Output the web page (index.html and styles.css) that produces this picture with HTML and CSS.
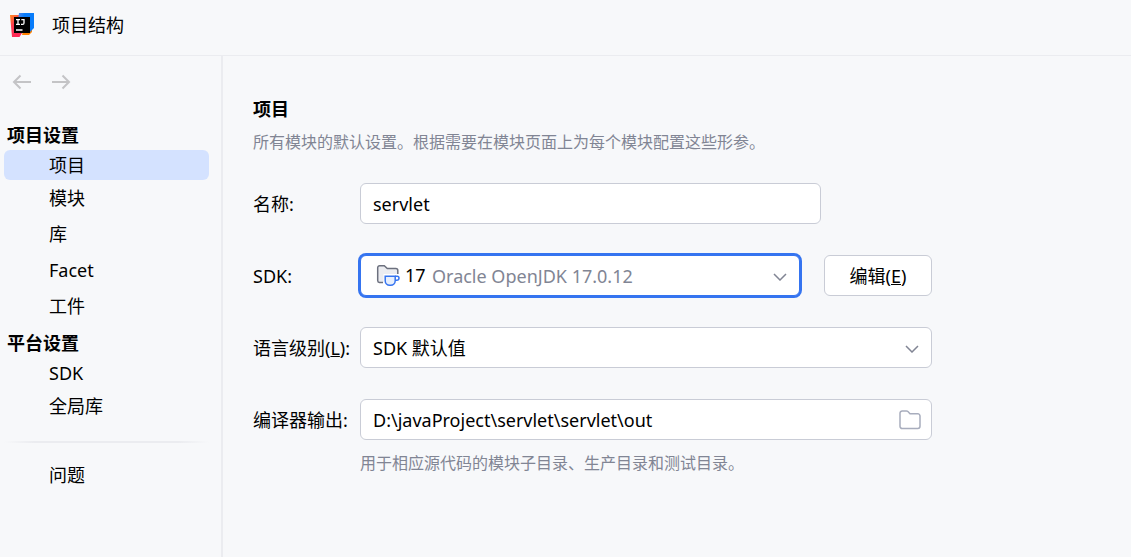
FILE: index.html
```html
<!DOCTYPE html>
<html lang="zh-CN">
<head>
<meta charset="utf-8">
<title>项目结构</title>
<link rel="stylesheet" href="styles.css">
</head>
<body>
<header class="titlebar">
  <svg class="logo" viewBox="0 0 24 24" aria-hidden="true">
    <defs>
      <linearGradient id="warm" x1="0" y1="0" x2="0.5" y2="1">
        <stop offset="0" stop-color="#ff8a1c"/>
        <stop offset="0.45" stop-color="#ff3d4f"/>
        <stop offset="1" stop-color="#fe2857"/>
      </linearGradient>
      <linearGradient id="cool" x1="0" y1="0" x2="1" y2="0.3">
        <stop offset="0" stop-color="#5b8bea"/>
        <stop offset="0.4" stop-color="#087cfa"/>
        <stop offset="1" stop-color="#087cfa"/>
      </linearGradient>
    </defs>
    <path fill="#ff8100" d="M14 14h8v5l-3 3h-7z"/>
    <path fill="url(#warm)" d="M0 2h12v18l-2.500 4H2z"/>
    <path fill="url(#cool)" d="M9 0h15v15l-4 4-12-12z"/>
    <path d="M4 4h16v16H4z"/>
    <path fill="none" stroke="#fff" stroke-width="1.300" d="M6 6.600h4M8 6.600v4.800M6 11.400h4M11.300 6.600h2.700v3.300c0 1-.6 1.500-1.300 1.500h-1.700M6 17h6.500"/>
  </svg>
  <h1 class="title">项目结构</h1>
</header>
<div class="body">
  <aside class="sidebar">
    <div class="history">
      <button class="history-button" type="button" aria-label="后退">
        <svg class="arrow" viewBox="0 0 20 16"><path d="M19 8H2M8.500 1.500 2 8l6.500 6.500"/></svg>
      </button>
      <button class="history-button" type="button" aria-label="前进">
        <svg class="arrow" viewBox="0 0 20 16"><path d="M1 8h17M11.500 1.500 18 8l-6.500 6.500"/></svg>
      </button>
    </div>
    <nav class="nav">
      <h2 class="nav-heading">项目设置</h2>
      <a class="nav-item compact selected" href="#project" aria-current="page">项目</a>
      <a class="nav-item" href="#modules">模块</a>
      <a class="nav-item" href="#libraries">库</a>
      <a class="nav-item" href="#facets">Facet</a>
      <a class="nav-item" href="#artifacts">工件</a>
      <h2 class="nav-heading">平台设置</h2>
      <a class="nav-item compact" href="#sdks">SDK</a>
      <a class="nav-item" href="#global">全局库</a>
      <hr class="divider">
      <a class="nav-item" href="#problems">问题</a>
    </nav>
  </aside>
  <main class="content">
    <h2 class="heading">项目</h2>
    <p class="hint">所有模块的默认设置。根据需要在模块页面上为每个模块配置这些形参。</p>
    <form class="form">
      <div class="row">
        <label class="label" for="name">名称:</label>
        <input class="control name" id="name" type="text" value="servlet">
      </div>
      <div class="row">
        <label class="label" for="sdk">SDK:</label>
        <div class="sdk-group">
          <div class="field">
            <select class="control sdk" id="sdk"><option>Oracle OpenJDK 17.0.12</option></select>
            <span class="sdk-version">
              <svg class="sdk-icon" viewBox="0 0 24 24" aria-hidden="true">
                <path fill="#ebecf0" stroke="#6c707e" stroke-width="1.500" d="M7 19.500H3.500A2 2 0 0 1 1.700 17.500V4.700a2 2 0 0 1 2-2h4.600l3 2.800h8.500a2 2 0 0 1 2 2V11"/>
                <path fill="#fff" d="M7.500 11H24V22H7.500z"/>
                <path fill="#e7effd" stroke="#3574f0" stroke-width="1.500" d="M9.200 13.200h10v4.500a4.500 4.500 0 0 1-4.500 4.500h-1a4.500 4.500 0 0 1-4.500-4.500z"/>
                <path fill="none" stroke="#3574f0" stroke-width="1.500" d="M19.200 13.200h2a1.800 1.800 0 0 1 1.800 1.800 2.300 2.300 0 0 1-2.300 2.300h-1.500"/>
              </svg>
              17
            </span>
            <svg class="chevron" viewBox="0 0 14 8" aria-hidden="true"><path d="m1 1 6 6 6-6"/></svg>
          </div>
          <button class="edit" type="button">编辑(<u>E</u>)</button>
        </div>
      </div>
      <div class="row">
        <label class="label" for="level">语言级别(<u>L</u>):</label>
        <div class="field">
          <select class="control" id="level"><option>SDK 默认值</option></select>
          <svg class="chevron" viewBox="0 0 14 8" aria-hidden="true"><path d="m1 1 6 6 6-6"/></svg>
        </div>
      </div>
      <div class="row">
        <label class="label" for="output">编译器输出:</label>
        <div class="field">
          <input class="control" id="output" type="text" value="D:\javaProject\servlet\servlet\out">
          <button class="browse" type="button" aria-label="浏览">
            <svg class="folder" viewBox="0 0 22 20"><path d="M1 3.200A2.200 2.200 0 0 1 3.200 1H7.500a2 2 0 0 1 1.400.6L11 3.800h7.800A2.200 2.200 0 0 1 21 6v10.300a2.200 2.200 0 0 1-2.200 2.200H3.200A2.200 2.200 0 0 1 1 16.300z"/></svg>
          </button>
        </div>
      </div>
      <p class="hint output-hint">用于相应源代码的模块子目录、生产目录和测试目录。</p>
    </form>
  </main>
</div>
</body>
</html>
```
FILE: styles.css
```css
* {
  box-sizing: border-box;
}

body {
  display: flex;
  flex-direction: column;
  min-height: 100vh;
  margin: 0;
  background: #f7f8fa;
  color: #000;
  font: 18px/24px "Noto Sans", "Noto Sans CJK SC", sans-serif;
}

h1, h2, p {
  margin: 0;
}

.titlebar {
  display: flex;
  align-items: center;
  gap: 18px;
  height: 56px;
  padding: 0 10px 5px;
  border-bottom: 1px solid #ebecf0;
}

.logo {
  width: 24px;
  height: 24px;
}

.title {
  font-size: 18px;
  font-weight: 400;
}

.body {
  display: flex;
  flex: 1;
}

.sidebar {
  flex: none;
  width: 223px;
  border-right: 2px solid #ebecf0;
}

.history {
  display: flex;
  gap: 19px;
  padding: 18px 12px;
}

.history-button {
  display: flex;
  padding: 0;
  border: 0;
  background: none;
}

.arrow {
  width: 20px;
  height: 16px;
  fill: none;
  stroke: #c4c4c6;
  stroke-width: 2;
}

.nav {
  display: flex;
  flex-direction: column;
  padding: 8px 12px 0 4px;
}

.nav-heading {
  padding: 7px 3px 3px;
  font-size: 18px;
  font-weight: 700;
}

.nav-item {
  padding: 6px 6px 6px 45px;
  border-radius: 6px;
  color: #000;
  text-decoration: none;
}

.compact {
  padding-top: 3px;
  padding-bottom: 3px;
}

.selected {
  background: #d4e2ff;
}

.divider {
  width: 100%;
  height: 2px;
  margin: 17px 0 14px;
  border: 0;
  background: linear-gradient(90deg, transparent, #ebecf0 15%, #ebecf0 85%, transparent);
}

.content {
  flex: 1;
  padding: 41px 30px;
}

.heading {
  font-size: 18px;
  font-weight: 700;
}

.hint {
  margin-top: 9px;
  color: #818594;
  font-size: 16px;
}

.form {
  display: flex;
  flex-direction: column;
  gap: 31px;
  max-width: 679px;
  margin-top: 29px;
}

.row {
  display: grid;
  grid-template-columns: 107px 1fr;
  align-items: center;
}

.label {
  white-space: nowrap;
}

.field {
  position: relative;
  flex: 1;
}

.control {
  display: block;
  width: 100%;
  height: 41px;
  padding: 0 12px;
  border: 1px solid #c9ccd6;
  border-radius: 6px;
  outline: 0;
  appearance: none;
  background: #fff;
  color: #000;
  font: inherit;
}

.name {
  max-width: 461px;
}

.sdk-group {
  display: flex;
  gap: 24px;
}

.sdk {
  padding-left: 71px;
  border-color: #3574f0;
  box-shadow: 0 0 0 2px #3574f0;
  color: #818594;
}

.sdk-version {
  position: absolute;
  top: 8px;
  left: 16px;
  display: flex;
  gap: 5px;
  pointer-events: none;
}

.sdk-icon {
  width: 24px;
  height: 24px;
}

.chevron {
  position: absolute;
  top: 18px;
  right: 13px;
  width: 14px;
  height: 8px;
  fill: none;
  stroke: #818594;
  stroke-width: 1.5;
  pointer-events: none;
}

.edit {
  width: 108px;
  height: 41px;
  padding: 0;
  border: 1px solid #c9ccd6;
  border-radius: 6px;
  background: #fff;
  color: #000;
  font: inherit;
}

.browse {
  position: absolute;
  top: 11px;
  right: 11px;
  display: flex;
  padding: 0;
  border: 0;
  background: none;
}

.folder {
  width: 22px;
  height: 20px;
  fill: none;
  stroke: #a8adbd;
  stroke-width: 1.5;
}

.output-hint {
  margin-top: -20px;
  padding-left: 107px;
}
```
